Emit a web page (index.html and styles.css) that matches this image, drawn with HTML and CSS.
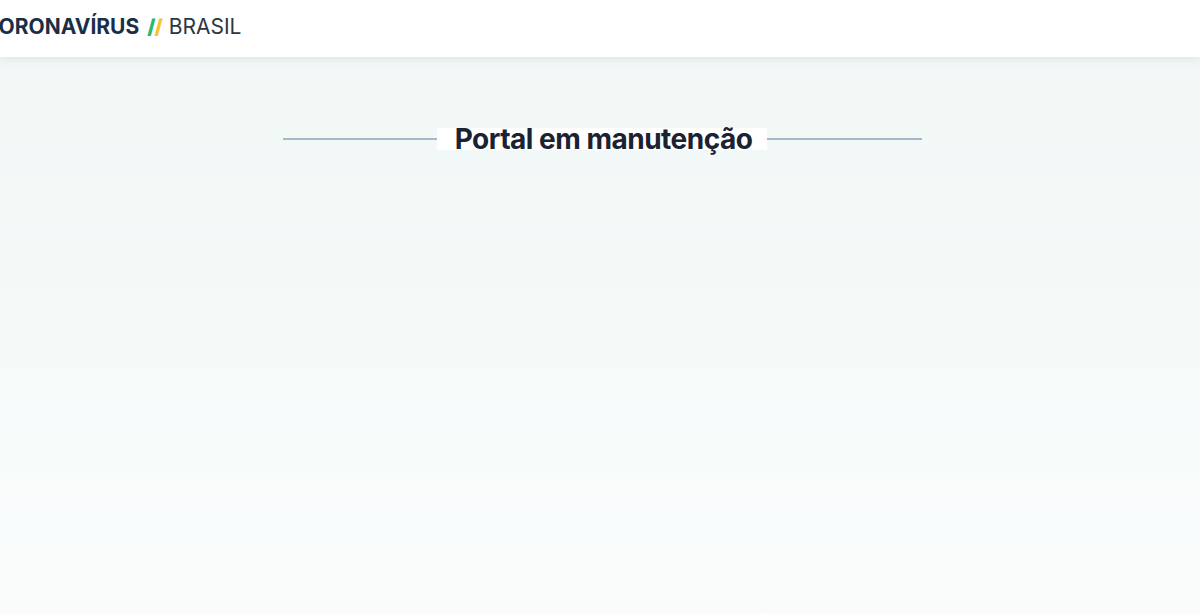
FILE: index.html
```html
<!DOCTYPE html>
<html lang="pt-BR">
<head>
<meta charset="utf-8">
<title>Coronavírus Brasil</title>
<link rel="stylesheet" href="styles.css">
</head>
<body>
<header class="topbar">
  <div class="logo">
    <span class="logo-main">CORONAVÍRUS</span>
    <span class="logo-slashes"><span class="slash green">/</span><span class="slash yellow">/</span></span>
    <span class="logo-country">BRASIL</span>
  </div>
</header>
<main class="content">
  <div class="title-row">
    <span class="rule"></span>
    <h1 class="title">Portal em manutenção</h1>
    <span class="rule"></span>
  </div>
</main>
</body>
</html>
```

FILE: styles.css
```css
* { box-sizing: border-box; }
html, body { height: 100%; }
body {
  margin: 0;
  font-family: Inter, "Open Sans", sans-serif;
  background: linear-gradient(to bottom, #f0f7f5 0%, #f5faf9 50%, #fafcfc 100%);
  overflow: hidden;
}
.topbar {
  height: 57px;
  background: #ffffff;
  box-shadow: 0 2px 8px rgba(40, 70, 70, 0.10);
  display: flex;
  align-items: center;
  position: relative;
}
.logo {
  margin-left: -17px;
  display: flex;
  align-items: baseline;
  font-size: 21px;
  line-height: 24px;
  padding-bottom: 4px;
}
.logo-main {
  font-weight: 700;
  color: #1a2f47;
}
.logo-slashes {
  margin-left: 8px;
  font-weight: 900;
  font-size: 20px;
  letter-spacing: -1px;
}
.slash.green { color: #2db673; }
.slash.yellow { color: #f6c433; }
.logo-country {
  margin-left: 7px;
  font-weight: 400;
  color: #2c3542;
}
.content {
  display: flex;
  justify-content: center;
  padding-top: 71px;
}
.title-row {
  width: 639px;
  margin-left: 4px;
  display: flex;
  align-items: center;
}
.rule {
  flex: 1;
  height: 2px;
  background: #a3b9c9;
}
.title {
  margin: 0;
  background: #ffffff;
  color: #1b2232;
  font-size: 28px;
  font-weight: 700;
  line-height: 22px;
  height: 22px;
  padding: 0 15px 0 18px;
  letter-spacing: -0.5px;
  white-space: nowrap;
}
```
